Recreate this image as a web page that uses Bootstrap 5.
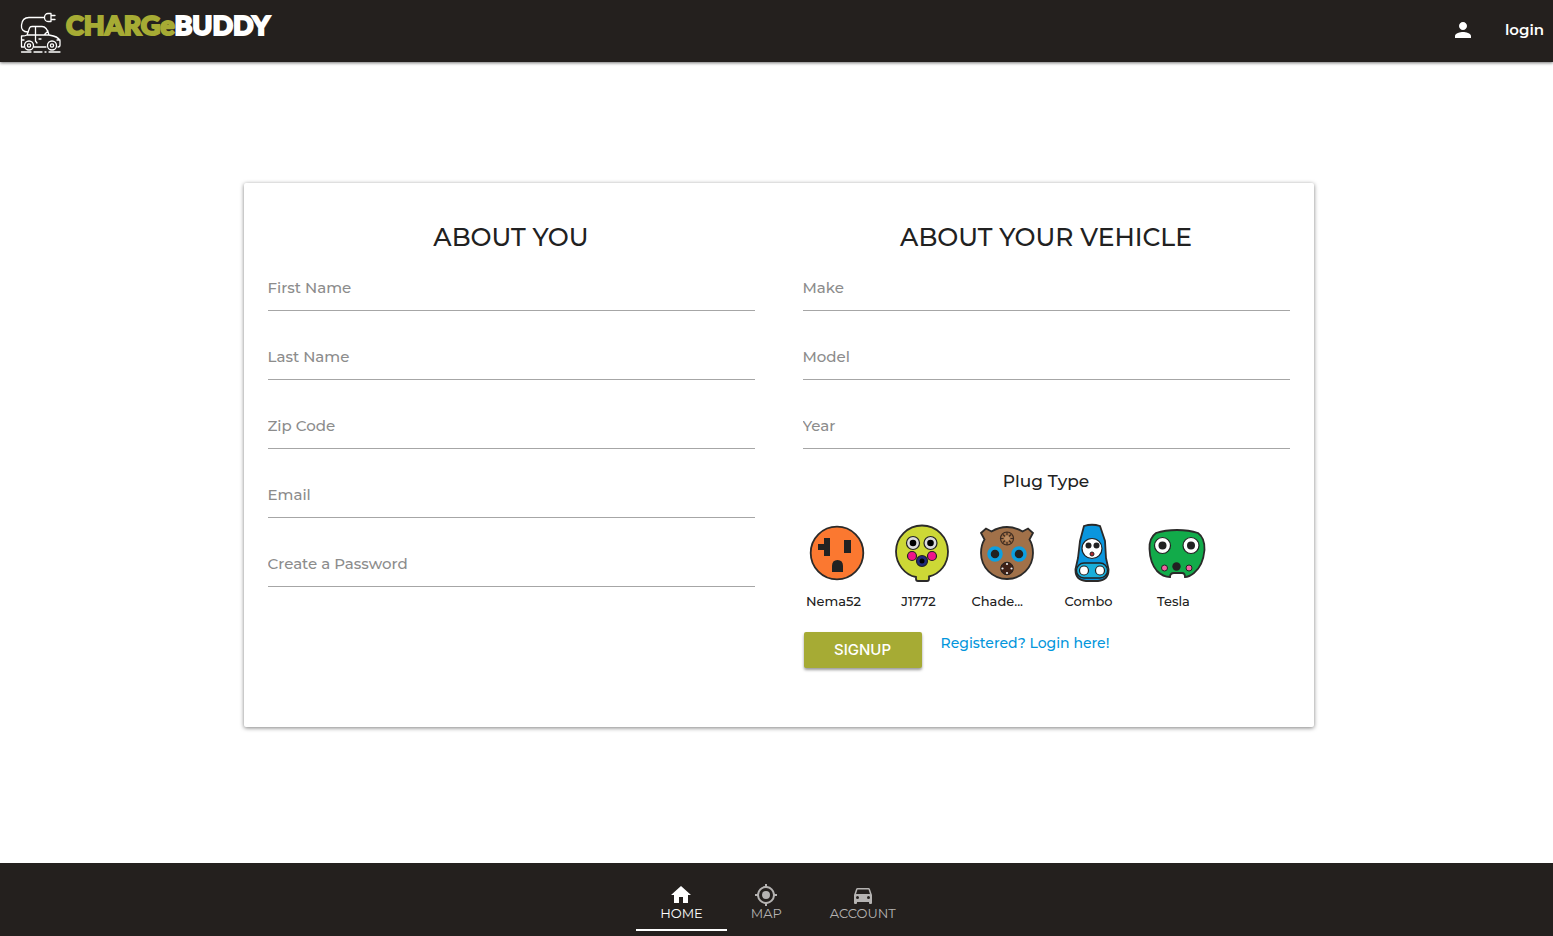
<!DOCTYPE html>
<html lang="en">
<head>
<meta charset="utf-8">
<meta name="viewport" content="width=device-width, initial-scale=1">
<title>ChargeBuddy - Sign up</title>
<link href="https://cdn.jsdelivr.net/npm/bootstrap@5.3.0/dist/css/bootstrap.min.css" rel="stylesheet">
<style>
  body { font-family: Montserrat, Inter, sans-serif; color: #212121; background: #fff; font-weight: 500; }
  .bar { background: #24201e; }
  .top-bar { height: 62px; padding: 0 9px 0 20px; box-shadow: 0 1px 3px rgba(0,0,0,.55); }
  .brand-art { width: 42px; height: 42px; margin-top: 12px; }
  .brand-text { font: 900 27px/36px "Luckiest Guy", Lato, sans-serif; margin: 7px 0 0 4px; color: #fff; -webkit-text-stroke: 2px currentColor; }
  .brand-text span { color: #a6ab34; }
  .account-nav { height: 60px; gap: 30px; }
  .login-link { font-size: 15px; font-weight: 600; }
  .page { padding: 121px 12px 24px 16px; }
  .signup { max-width: 1070px; min-height: 544px; border-radius: 2px; box-shadow: 0 1px 4px rgba(0,0,0,.5); }
  .pane { padding: 36px 24px 24px; }
  .pane h2 { font-size: 25px; line-height: 36px; margin: 0; text-align: center; }
  .line-field { display: block; width: 100%; height: 46px; margin-bottom: 23px; padding: 0; border: 0; border-bottom: 1px solid #a6a6a6; border-radius: 0; background: none; font-size: 15px; font-weight: 500; box-shadow: none; outline: 0; }
  .line-field::placeholder { color: #8c8c8c; opacity: 1; }
  .line-field:focus { border-color: #a6ab34; }
  .fields { padding-top: 10px; }
  .plug-title { font-size: 17px; line-height: 24px; margin: -3px 0 0; text-align: center; }
  .plugs { padding-top: 30px; margin-left: -8px; }
  .plug { width: 85px; padding: 0; border: 0; background: none; font-size: 13px; line-height: 20px; font-weight: 500; color: #212121; }
  .plug svg { display: block; width: 60px; height: 60px; margin: 0 auto 8px; }
  .plug-name { display: block; width: 64px; margin-left: 7px; }
  .actions { padding-top: 21px; gap: 19px; margin-left: 1px; }
  .btn-signup { width: 118px; height: 36px; padding: 0; border: 0; border-radius: 2px; background: #a6ab34; color: #fff; font: 500 15px/36px Inter, sans-serif; box-shadow: 0 2px 3px rgba(0,0,0,.4); }
  .btn-signup:hover { background: #979c2c; color: #fff; }
  .login-here { font-size: 14px; line-height: 22px; color: #0396dc; }
  .tab-bar { min-height: 73px; padding: 20px 0 5px 3px; }
  .tab-link { padding: 0 24px; height: 48px; font-size: 13px; line-height: 12px; font-weight: 400; color: #b5b3b2; border-bottom: 2px solid transparent; }
  .tab-link svg { width: 24px; height: 24px; }
  .tab-link.active { color: #fff; border-color: #fff; }
</style>
</head>
<body class="d-flex flex-column min-vh-100">
<header class="bar top-bar d-flex justify-content-between">
  <a href="#" class="d-flex align-items-start text-decoration-none">
    <svg class="brand-art" viewBox="0 0 42 42" fill="none" stroke="#fff" stroke-width="1.3" stroke-linecap="round" stroke-linejoin="round" aria-hidden="true">
      <path d="M8 20C3 20 1 17 1.500 13C2 8 5 5.500 9 5.500H24M31 1.500H28C26 1.500 24.500 3.500 24.500 5.500S26 9.500 28 9.500H31ZM31 3.500H35M31 7.500H35"/>
      <path d="M4 35H1.500V24C4 24 5.500 24 7 23L9.500 16Q10 14.500 12 14.500H22C26 14.500 28 19 29 23C35 24 39 25 40 29V33Q40 35 38 35M14 35H26M7 23H29M15.500 15V29L17 31M19 27H21M24 23L28 19M1.500 28H4M37 28H40"/>
      <circle cx="9" cy="33.500" r="4.500"/><circle cx="9" cy="33.500" r="1.600"/><circle cx="32" cy="33.500" r="4.500"/><circle cx="32" cy="33.500" r="1.600"/>
      <path d="M1.500 40H11M14 40H22M25 40H26M29 40H40"/>
    </svg>
    <span class="brand-text"><span>CHARGe</span>BUDDY</span>
  </a>
  <nav class="account-nav d-flex align-items-center" aria-label="Account">
    <a href="#" class="d-flex" aria-label="Profile"><svg width="24" height="24" viewBox="0 0 24 24" fill="#fff"><path d="M12 12c2.200 0 4-1.800 4-4s-1.800-4-4-4-4 1.800-4 4 1.800 4 4 4zm0 2c-2.700 0-8 1.300-8 4v2h16v-2c0-2.700-5.300-4-8-4z"/></svg></a>
    <a href="#" class="login-link text-white text-decoration-none">login</a>
  </nav>
</header>

<main class="page flex-grow-1">
  <form class="signup mx-auto bg-white">
    <div class="row g-0">
      <section class="col-md-6 pane">
        <h2>ABOUT YOU</h2>
        <div class="fields">
          <input class="line-field" type="text" placeholder="First Name" aria-label="First Name">
          <input class="line-field" type="text" placeholder="Last Name" aria-label="Last Name">
          <input class="line-field" type="text" placeholder="Zip Code" aria-label="Zip Code">
          <input class="line-field" type="email" placeholder="Email" aria-label="Email">
          <input class="line-field" type="password" placeholder="Create a Password" aria-label="Create a Password">
        </div>
      </section>
      <section class="col-md-6 pane">
        <h2>ABOUT YOUR VEHICLE</h2>
        <div class="fields">
          <input class="line-field" type="text" placeholder="Make" aria-label="Make">
          <input class="line-field" type="text" placeholder="Model" aria-label="Model">
          <input class="line-field" type="text" placeholder="Year" aria-label="Year">
        </div>
        <h3 class="plug-title">Plug Type</h3>
        <div class="plugs d-flex flex-wrap">
          <button type="button" class="plug">
            <svg viewBox="0 0 60 60"><circle cx="30" cy="30" r="26.300" fill="#fb7830" stroke="#2b2a29" stroke-width="1.800"/><path d="M17 15h6v18h-6v-6h-6v-6h6zM37 17h7v13h-7zM25 49v-6q0-6 5.500-6t5.500 6v6z" fill="#222"/></svg>
            <span class="plug-name">Nema52</span>
          </button>
          <button type="button" class="plug">
            <svg viewBox="0 0 60 60"><path d="M24 54C13 52 4 41 4 28.500A26 26 0 0 1 56 28.500C56 41 48 51 37 53.500V56Q37 58 35 58H26Q24 58 24 56Z" fill="#cdd836" stroke="#2b2a29" stroke-width="1.800"/><g stroke="#222" stroke-width="1.200"><circle cx="21" cy="20" r="6.500" fill="#ddd"/><circle cx="38.500" cy="20" r="6.500" fill="#ddd"/><circle cx="20" cy="33" r="4.500" fill="#f0128a"/><circle cx="40" cy="33" r="4.500" fill="#f0128a"/><circle cx="30" cy="38" r="5.500" fill="#202a7c"/></g><circle cx="21" cy="20" r="3.300"/><circle cx="38.500" cy="20" r="3.300"/><circle cx="30" cy="38" r="2.500"/></svg>
            <span class="plug-name">J1772</span>
          </button>
          <button type="button" class="plug">
            <svg viewBox="0 0 60 60"><path d="M4 10L9 5.500L14.500 8.500Q22 4 30 4T45.500 8.500L51 5.500L56 10L52.500 16.500Q56 22 56 30A26 26 0 0 1 4 30Q4 22 7.500 16.500Z" fill="#a17149" stroke="#2b2a29" stroke-width="1.800"/><g stroke="#3d2b20" stroke-width="1.200"><circle cx="30" cy="15.500" r="6.500" fill="#a17149"/><path d="M30 9v3M30 19v3M23.500 15.500h3M33.500 15.500h3M26 11.500l8 8M34 11.500l-8 8"/></g><circle cx="30" cy="15.500" r="2.800" fill="#b98a60"/><circle cx="18" cy="31" r="6" fill="#222" stroke="#0d9fe0" stroke-width="3.500"/><circle cx="42" cy="31" r="6" fill="#222" stroke="#0d9fe0" stroke-width="3.500"/><circle cx="30" cy="45.500" r="6.300" fill="#3f2117" stroke="#222"/><g fill="#eee"><circle cx="30" cy="41" r="1.100"/><circle cx="30" cy="50" r="1.100"/><circle cx="25.500" cy="45.500" r="1.100"/><circle cx="34.500" cy="45.500" r="1.100"/></g></svg>
            <span class="plug-name text-start">Chade...</span>
          </button>
          <button type="button" class="plug">
            <svg viewBox="0 0 60 60"><path d="M22 3Q30 .5 38 3L43 18L44 35L46.500 46Q47 57 36 58H24Q13 57 13.500 46L16 35L18 18Z" fill="#0a96de" stroke="#2b2a29" stroke-width="1.800"/><rect x="14.500" y="40" width="31" height="15" rx="7.500" fill="#19aeda" stroke="#222" stroke-width="1.300"/><g fill="#fff" stroke="#222" stroke-width="1.200"><circle cx="30" cy="25.500" r="10"/><circle cx="22" cy="47.500" r="4.500"/><circle cx="38" cy="47.500" r="4.500"/></g><g fill="#222"><circle cx="26.500" cy="22.500" r="3"/><circle cx="34.500" cy="22.500" r="3"/></g><circle cx="30" cy="31" r="2" fill="#b8242c" stroke="#222"/></svg>
            <span class="plug-name">Combo</span>
          </button>
          <button type="button" class="plug">
            <svg viewBox="0 0 60 60"><path d="M9 10Q18 7 30 7T51 10Q58 15 57.500 27Q56 43 47 50Q42 54 38 54Q38 50 35 50H27Q23 50 23 54Q16 54 10 48Q3 40 2.500 26Q2 15 9 10Z" fill="#12ab4a" stroke="#2b2a29" stroke-width="1.800"/><g fill="#fff" stroke="#222" stroke-width="1.200"><circle cx="15.500" cy="22.500" r="8"/><circle cx="44" cy="22.500" r="8"/></g><circle cx="15.500" cy="22.500" r="4" fill="#222"/><circle cx="44" cy="22.500" r="4" fill="#222"/><circle cx="29.500" cy="43.500" r="4.200" fill="#222"/><g fill="#f263a2" stroke="#222"><circle cx="17.500" cy="45" r="3"/><circle cx="42" cy="45" r="3"/></g></svg>
            <span class="plug-name">Tesla</span>
          </button>
        </div>
        <div class="actions d-flex align-items-start">
          <button type="submit" class="btn btn-signup">SIGNUP</button>
          <a href="#" class="login-here text-decoration-none">Registered? Login here!</a>
        </div>
      </section>
    </div>
  </form>
</main>

<footer class="bar tab-bar">
  <nav class="d-flex justify-content-center" aria-label="Main">
    <a href="#" class="tab-link active d-flex flex-column align-items-center text-decoration-none"><svg viewBox="0 0 24 24" fill="currentColor"><path d="M10 20v-6h4v6h5v-8h3L12 3 2 12h3v8z"/></svg>HOME</a>
    <a href="#" class="tab-link d-flex flex-column align-items-center text-decoration-none"><svg viewBox="0 0 24 24" fill="currentColor"><path d="M12 8a4 4 0 1 0 0 8 4 4 0 0 0 0-8zm8.940 3A9 9 0 0 0 13 3.060V1h-2v2.060A9 9 0 0 0 3.060 11H1v2h2.060A9 9 0 0 0 11 20.940V23h2v-2.060A9 9 0 0 0 20.940 13H23v-2zM12 19a7 7 0 1 1 0-14 7 7 0 0 1 0 14z"/></svg>MAP</a>
    <a href="#" class="tab-link d-flex flex-column align-items-center text-decoration-none"><svg viewBox="0 0 24 24" fill="currentColor"><path d="M18.920 6A1.500 1.500 0 0 0 17.500 5h-11A1.500 1.500 0 0 0 5.080 6L3 12v8a1 1 0 0 0 1 1h1a1 1 0 0 0 1-1v-1h12v1a1 1 0 0 0 1 1h1a1 1 0 0 0 1-1v-8zM6.500 16a1.500 1.500 0 1 1 0-3 1.500 1.500 0 0 1 0 3zm11 0a1.500 1.500 0 1 1 0-3 1.500 1.500 0 0 1 0 3zM5 11l1.500-4.500h11L19 11z"/></svg>ACCOUNT</a>
  </nav>
</footer>
<script src="https://cdn.jsdelivr.net/npm/bootstrap@5.3.0/dist/js/bootstrap.bundle.min.js"></script>
</body>
</html>
